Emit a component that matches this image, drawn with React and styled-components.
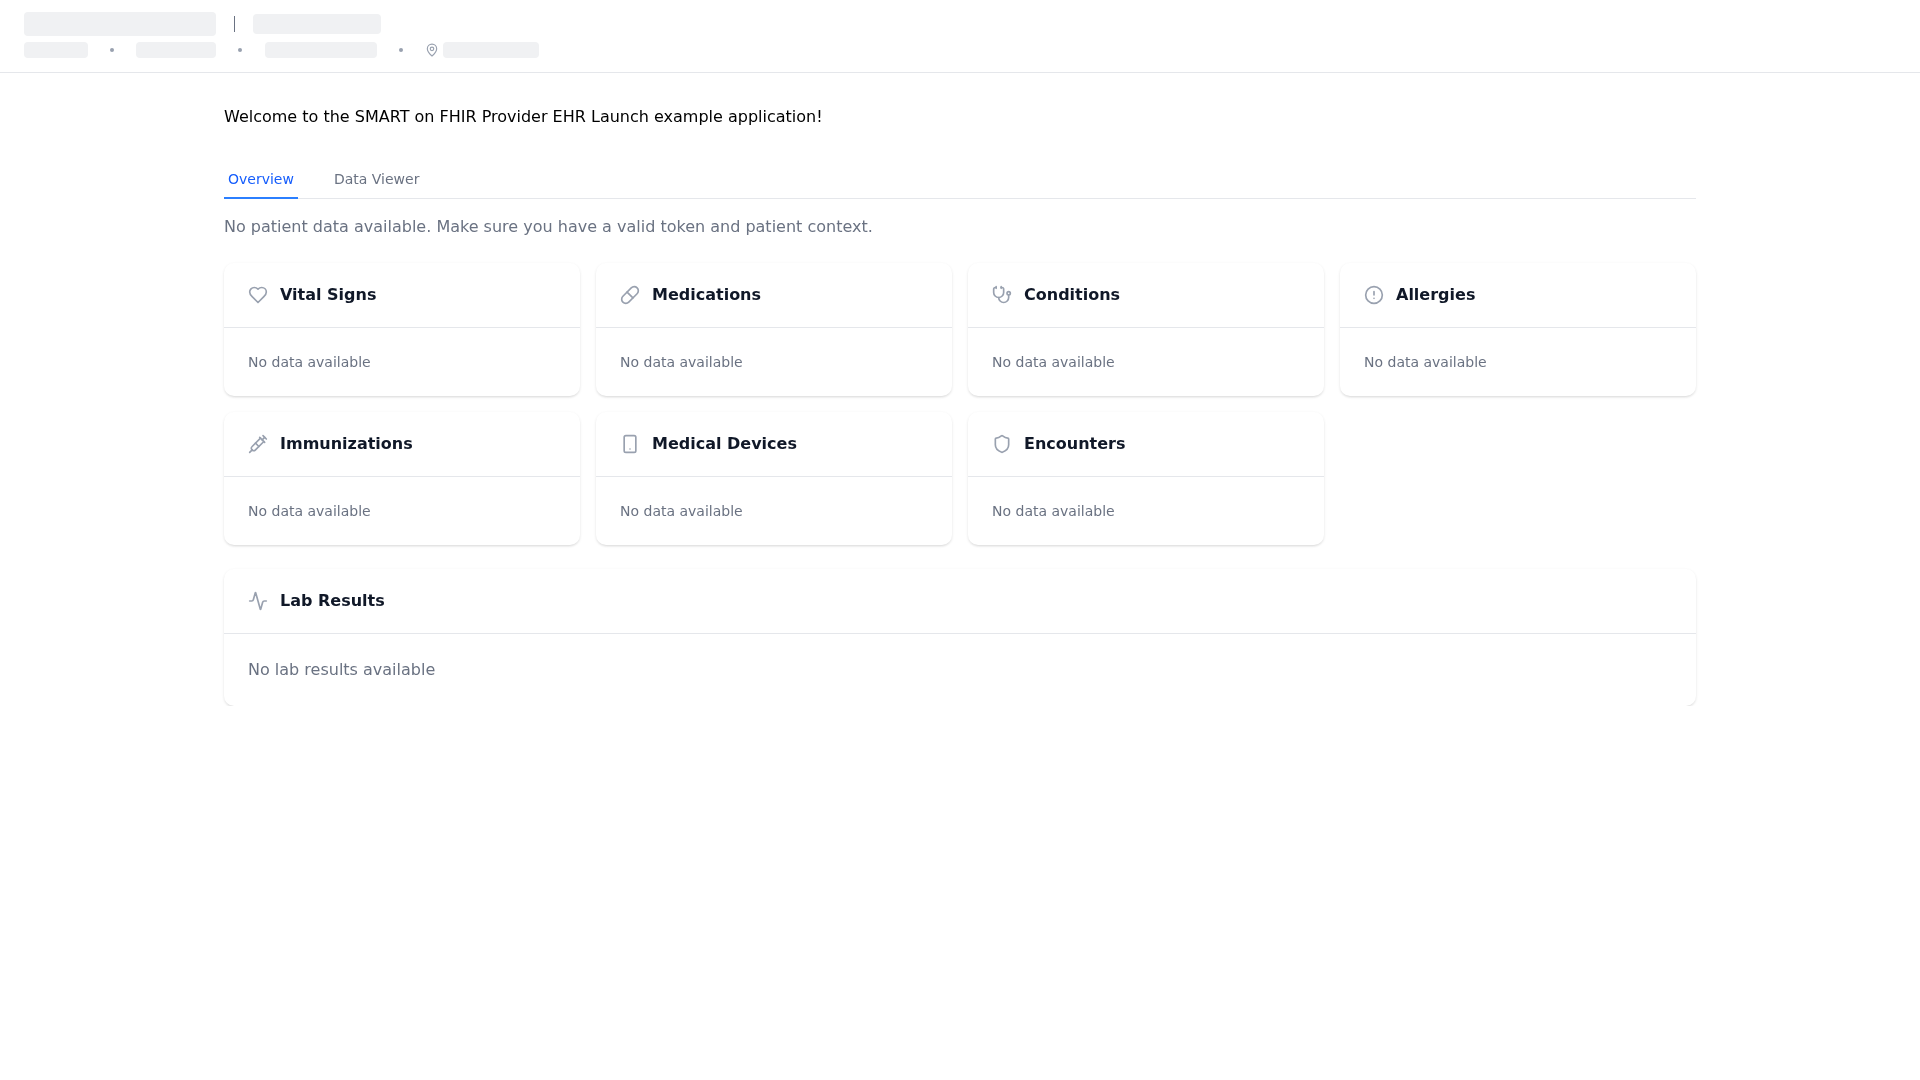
import React from "react";
import styled, { createGlobalStyle } from "styled-components";
import { Pill, Stethoscope, CircleAlert, Syringe, Smartphone, Shield, Activity, MapPin } from "lucide-react";

const Global = createGlobalStyle`
  html, body { margin: 0; padding: 0; background: #fff; }
  body { font-family: "DejaVu Sans", sans-serif; -webkit-font-smoothing: antialiased; }
  * { box-sizing: border-box; }
`;

const Header = styled.header`
  height: 73px;
  border-bottom: 1px solid #e5e7eb;
  padding: 12px 24px 0;
`;
const TitleRow = styled.div`
  display: flex;
  align-items: center;
  height: 24px;
`;
const MetaRow = styled.div`
  display: flex;
  align-items: center;
  height: 16px;
  margin-top: 6px;
`;
const Skeleton = styled.div`
  width: ${p => p.$w}px;
  height: ${p => p.$h}px;
  background: #f0f1f3;
  border-radius: 4px;
  flex: none;
`;
const Pipe = styled.span`
  width: 1px;
  height: 16px;
  background: #6a7282;
  margin: 0 18px 0 18px;
  flex: none;
`;
const Dot = styled.span`
  width: 4px;
  height: 4px;
  border-radius: 50%;
  background: #99a1af;
  margin: 0 ${p => p.$r}px 0 22px;
  flex: none;
`;
const PinIcon = styled(MapPin)`
  width: 14px;
  height: 14px;
  color: #99a1af;
  margin-right: 4px;
  flex: none;
`;
const Main = styled.main`
  width: 1472px;
  margin: 0 auto;
  padding-top: 32px;
  will-change: opacity;
`;
const Welcome = styled.p`
  margin: 0 0 32px;
  font-size: 16px;
  line-height: 24px;
  color: #000;
`;
const Tabs = styled.nav`
  display: flex;
  gap: 32px;
  border-bottom: 1px solid #e5e7eb;
`;
const Tab = styled.div`
  padding: 8px 4px;
  font-size: 14px;
  line-height: 20px;
  margin-bottom: -1px;
  color: ${p => (p.$active ? "#155dfc" : "#6a7282")};
  border-bottom: 2px solid ${p => (p.$active ? "#2b7fff" : "transparent")};
`;
const Notice = styled.p`
  margin: 16px 0 24px;
  font-size: 16px;
  line-height: 24px;
  color: #6a7282;
`;
const Grid = styled.div`
  display: grid;
  grid-template-columns: repeat(4, 1fr);
  gap: 16px;
`;
const Card = styled.section`
  background: #fff;
  border-radius: 10px;
  box-shadow: 0 1px 3px rgba(0,0,0,.1), 0 2px 3px -1px rgba(0,0,0,.08);
`;
const WideCard = styled(Card)`
  margin-top: 24px;
`;
const CardHead = styled.div`
  display: flex;
  align-items: center;
  gap: 12px;
  padding: 20px 24px;
  border-bottom: 1px solid #e5e7eb;
`;
const CardTitle = styled.h3`
  margin: 0;
  font-size: 16px;
  line-height: 24px;
  font-weight: 700;
  color: #101828;
`;
const CardBody = styled.div`
  padding: 24px;
  font-size: ${p => (p.$large ? 16 : 14)}px;
  line-height: ${p => (p.$large ? 24 : 20)}px;
  color: #6a7282;
`;
const iconProps = { size: 20, color: "#99a1af", strokeWidth: 2 };

const Heart = props => (
  <svg xmlns="http://www.w3.org/2000/svg" width={props.size} height={props.size} viewBox="0 0 24 24" fill="none" stroke={props.color} strokeWidth={props.strokeWidth} strokeLinecap="round" strokeLinejoin="round">
    <path d="M19 14c1.49-1.46 3-3.21 3-5.5A5.5 5.5 0 0 0 16.5 3c-1.76 0-3 .5-4.5 2-1.5-1.5-2.74-2-4.5-2A5.5 5.5 0 0 0 2 8.5c0 2.3 1.5 4.05 3 5.5l7 7Z" />
  </svg>
);

const cards = [
  ["Vital Signs", Heart],
  ["Medications", Pill],
  ["Conditions", Stethoscope],
  ["Allergies", CircleAlert],
  ["Immunizations", Syringe],
  ["Medical Devices", Smartphone],
  ["Encounters", Shield],
];

export default function App() {
  return (
    <>
      <Global />
      <Header>
        <TitleRow>
          <Skeleton $w={192} $h={24} />
          <Pipe />
          <Skeleton $w={128} $h={20} />
        </TitleRow>
        <MetaRow>
          <Skeleton $w={64} $h={16} />
          <Dot $r={22} />
          <Skeleton $w={80} $h={16} />
          <Dot $r={23} />
          <Skeleton $w={112} $h={16} />
          <Dot $r={22} />
          <PinIcon />
          <Skeleton $w={96} $h={16} />
        </MetaRow>
      </Header>
      <Main>
        <Welcome>Welcome to the SMART on FHIR Provider EHR Launch example application!</Welcome>
        <Tabs>
          <Tab $active>Overview</Tab>
          <Tab>Data Viewer</Tab>
        </Tabs>
        <Notice>No patient data available. Make sure you have a valid token and patient context.</Notice>
        <Grid>
          {cards.map(([title, Icon]) => (
            <Card key={title}>
              <CardHead>
                <Icon {...iconProps} />
                <CardTitle>{title}</CardTitle>
              </CardHead>
              <CardBody>No data available</CardBody>
            </Card>
          ))}
        </Grid>
        <WideCard>
          <CardHead>
            <Activity {...iconProps} />
            <CardTitle>Lab Results</CardTitle>
          </CardHead>
          <CardBody $large>No lab results available</CardBody>
        </WideCard>
      </Main>
    </>
  );
}
